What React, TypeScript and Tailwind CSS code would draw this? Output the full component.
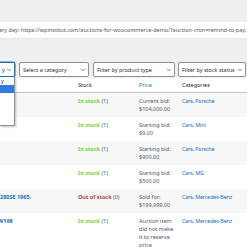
import { ChevronDown } from 'lucide-react';

const rows = [
  { name: '', stock: 'in', label: 'Current bid:', amount: '$104,000.00', cat: 'Cars, Porsche' },
  { name: '', stock: 'in', label: 'Starting bid:', amount: '$9.00', cat: 'Cars, Mini' },
  { name: '', stock: 'in', label: 'Starting bid:', amount: '$900.00', cat: 'Cars, Porsche' },
  { name: '', stock: 'in', label: 'Starting bid:', amount: '$500.00', cat: 'Cars, MG' },
  { name: '280SE 1965.', stock: 'out', label: 'Sold for:', amount: '$199,999.00', cat: 'Cars, Mercedes-Benz' },
];

function Select({ label, className }: { label: string; className: string }) {
  return (
    <div
      className={`flex h-[15px] items-center justify-between rounded-[2px] border border-[#8c8f94] bg-white pl-[3px] pr-[2px] text-[#2c3338] ${className}`}
    >
      <span className="whitespace-nowrap">{label}</span>
      <ChevronDown size={6} strokeWidth={3} className="text-[#50575e]" />
    </div>
  );
}

function Stock({ kind }: { kind: string }) {
  if (kind === 'out') {
    return (
      <span>
        <span className="font-bold text-[#a44]">Out of stock</span> <span className="text-[#50575e]">(0)</span>
      </span>
    );
  }
  return (
    <span>
      <span className="font-bold text-[#7ad03a]">In stock</span> <span className="text-[#50575e]">(1)</span>
    </span>
  );
}

export default function App() {
  return (
    <div className="relative h-[247px] w-[247px] overflow-hidden bg-[#f0f0f1] pt-[22px] font-['Noto_Sans',sans-serif] text-[5.5px] leading-[8px]">
      <div className="flex h-[16px] items-center overflow-hidden whitespace-nowrap bg-white text-[#50575e] shadow-[0_1px_1px_rgba(0,0,0,0.04)]">
        <span className="-ml-[1px]">
          ery day: https://wpinstitut.com/auctions-for-woocommerce-demo/?auction-cron=remind-to-pay. Set up
        </span>
      </div>

      <div className="mt-[24px] flex h-[15px] items-center">
        <div className="flex h-[15px] w-[15px] items-center justify-between rounded-r-[2px] border-y border-r border-[#2271b1] bg-white pl-[2px] pr-[2px] text-[#2c3338] shadow-[0_0_0_0.5px_#2271b1]">
          <span>y</span>
          <ChevronDown size={6} strokeWidth={3} className="text-[#50575e]" />
        </div>
        <Select label="Select a category" className="ml-[4px] w-[70px]" />
        <Select label="Filter by product type" className="ml-[4px] w-[82px]" />
        <Select label="Filter by stock status" className="ml-[3px] w-[68px]" />
      </div>

      <div className="mt-[1px] bg-white">
        <div className="grid h-[15px] grid-cols-[78px_61px_43px_1fr] items-center border-b border-[#c3c4c7] text-[#1d2327]">
          <span />
          <span>Stock</span>
          <span className="text-[#2271b1]">Price</span>
          <span>Categories</span>
        </div>

        {rows.map((r, i) => (
          <div
            key={i}
            className={`grid h-[24px] grid-cols-[78px_61px_43px_1fr] pt-[4px] ${i % 2 === 0 ? 'bg-[#f6f7f7]' : 'bg-white'}`}
          >
            <span className="whitespace-nowrap font-bold text-[#2271b1]">{r.name}</span>
            <Stock kind={r.stock} />
            <div className="text-[#50575e]">
              <div>{r.label}</div>
              <div>{r.amount}</div>
            </div>
            <span className="whitespace-nowrap tracking-[-0.2px] text-[#2271b1]">{r.cat}</span>
          </div>
        ))}

        <div className="grid h-[40px] grid-cols-[78px_61px_43px_1fr] bg-white pt-[4px]">
          <span className="-ml-[2px] whitespace-nowrap font-bold text-[#2271b1]">W198</span>
          <Stock kind="in" />
          <div className="text-[#50575e]">
            <div>Auction item</div>
            <div>did not make</div>
            <div>it to reserve</div>
            <div>price</div>
          </div>
          <span className="whitespace-nowrap tracking-[-0.2px] text-[#2271b1]">Cars, Mercedes-Benz</span>
        </div>
      </div>

      <div className="absolute left-0 top-[77px] h-[49px] w-[15px] border-r border-b border-[#8c8f94] bg-white shadow-[1px_1px_2px_rgba(0,0,0,0.25)]">
        <div className="h-[8px] pl-[1px] leading-[8px] text-[#2c3338]">y</div>
        <div className="h-[8px] bg-[#2f7ee0]" />
      </div>
    </div>
  );
}
